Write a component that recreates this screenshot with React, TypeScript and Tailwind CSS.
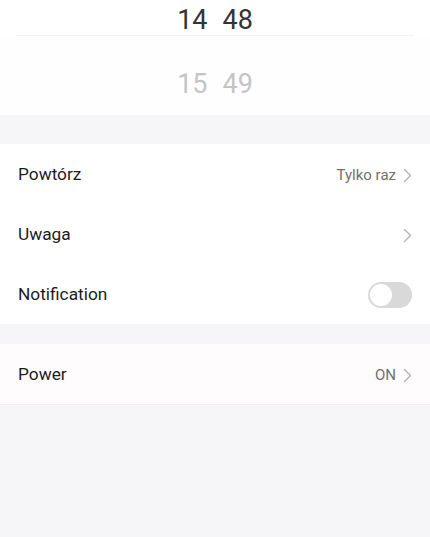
function Chevron() {
    return (
        <svg width="9" height="15" viewBox="0 0 9 15" fill="none" className="ml-[7px]">
            <polyline points="1.5,1.5 7.5,7.5 1.5,13.5" stroke="#b3b3b3" strokeWidth="1.4" strokeLinecap="round" strokeLinejoin="round" />
        </svg>
    );
}

function Row({ label, value, chevron = true, toggle = false }: { label: string; value?: string; chevron?: boolean; toggle?: boolean }) {
    return (
        <div className="h-[60px] pl-[18px] pr-[18px] pt-[2px] flex items-center justify-between">
            <span className="text-[17.3px] text-[#1c1c1c]">{label}</span>
            {toggle ? (
                <div className="w-[44px] h-[26px] rounded-full bg-[#d9d9d9] p-[2px] flex items-center">
                    <div className="w-[22px] h-[22px] rounded-full bg-white" />
                </div>
            ) : (
                <div className="flex items-center">
                    {value && <span className="text-[15px] text-[#707070]">{value}</span>}
                    {chevron && <Chevron />}
                </div>
            )}
        </div>
    );
}

export default function App() {
    return (
        <div className="min-h-[537px] bg-[#f6f6f8] font-['Roboto',sans-serif]">
            {/* Time picker */}
            <div className="bg-white h-[115px] flex flex-col">
                <div className="h-[36px] mx-[16px] border-b border-[#f2f2f4] flex items-center justify-center gap-[15px] pt-[5px] text-[27px] text-[#333] leading-none">
                    <span>14</span>
                    <span>48</span>
                </div>
                <div className="flex-1 bg-[#fefeff] flex items-start justify-center gap-[15px] pt-[35px] text-[27px] text-[#c4c4c6] leading-none">
                    <span>15</span>
                    <span>49</span>
                </div>
            </div>

            <div className="h-[29px]" />

            <div className="bg-white">
                <Row label="Powtórz" value="Tylko raz" />
                <Row label="Uwaga" />
                <Row label="Notification" toggle />
            </div>

            <div className="h-[20px]" />

            <div className="bg-[#fefcfd] border-b border-[#f0eef0]">
                <Row label="Power" value="ON" />
            </div>
        </div>
    );
}
